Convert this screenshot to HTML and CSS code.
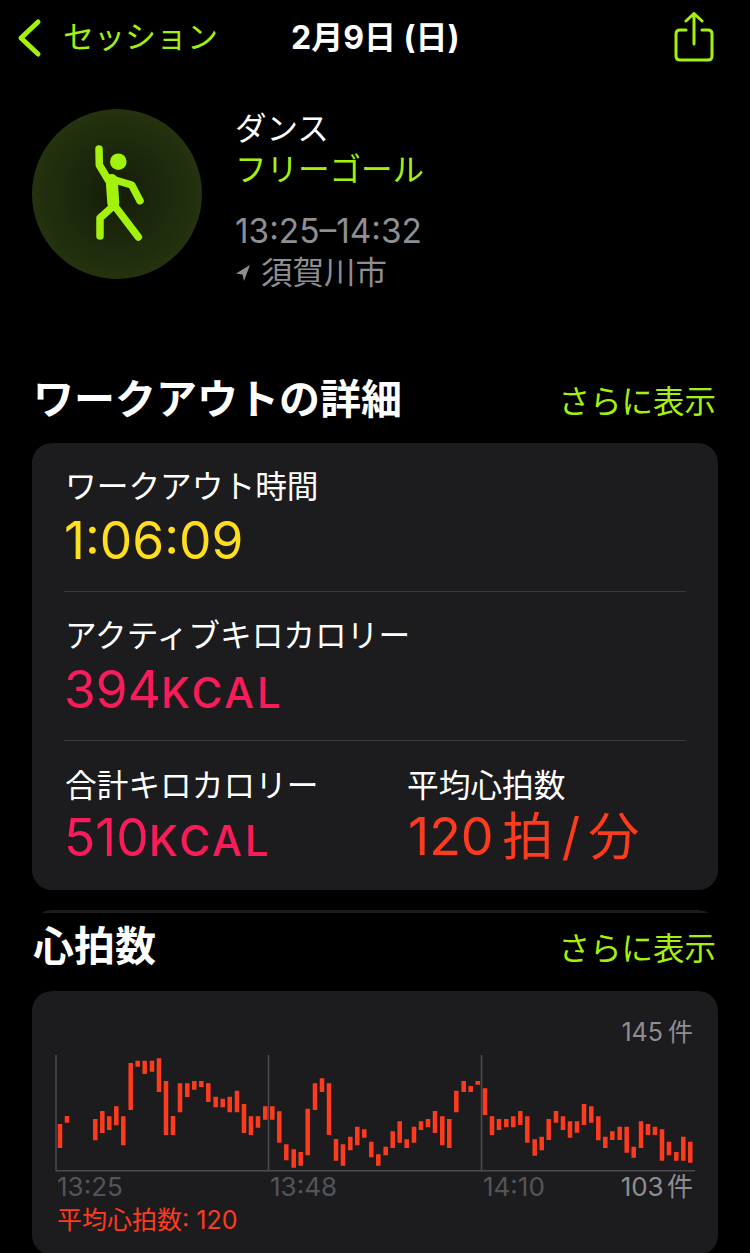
FILE: index.html
```html
<!DOCTYPE html>
<html lang="ja">
<head>
    <meta charset="UTF-8">
    <meta name="viewport" content="width=device-width, initial-scale=1.0">
    <title>ダンス</title>
    <link rel="stylesheet" href="styles.css">
</head>
<body>
    <div class="navBar">
        <div class="backBtn">
            <svg class="backIcon" width="26" height="40" viewBox="0 0 26 40"><path d="M22 4 L5 20 L22 36"/></svg>
            <span class="navText">セッション</span>
        </div>
        <div class="navTitle navText">2月9日 (日)</div>
        <svg class="shareIcon" width="40" height="52" viewBox="0 0 40 52">
            <path d="M12 18 H6 Q2 18 2 22 V44 Q2 48 6 48 H34 Q38 48 38 44 V22 Q38 18 34 18 H28"/>
            <path d="M20 32 V2 M12 9 L20 1.5 L28 9"/>
        </svg>
    </div>

    <div class="summary">
        <div class="activityCircle">
            <svg width="120" height="120" viewBox="57 134 120 120">
                <circle class="figHead" cx="118.3" cy="161.7" r="8.3"/>
                <path class="figLimb" d="M99 149 L99.3 165 L108.3 180 M115 180 L131.7 185 L140 200.7 M113.3 206 L100 218 V236 M114 205 L138.3 237"/>
                <path class="figBody" d="M111.7 180 L113.3 203"/>
            </svg>
        </div>
        <div class="summaryText">
            <div class="sumType">ダンス</div>
            <div class="sumGoal">フリーゴール</div>
            <div class="sumTime">13:25–14:32</div>
            <div class="sumPlace">
                <svg width="16" height="18" viewBox="0 0 16 18"><path d="M15 1 L1 9.5 L7.5 10.5 L9 17 Z"/></svg>
                <span>須賀川市</span>
            </div>
        </div>
    </div>

    <div class="sectionHead firstHead">
        <div class="sectionTitle">ワークアウトの詳細</div>
        <div class="moreLink">さらに表示</div>
    </div>

    <div class="card detailCard">
        <div class="statRow">
            <div class="stat">
                <div class="statLabel">ワークアウト時間</div>
                <div class="statValue yellow">1:06:09</div>
            </div>
        </div>
        <div class="statRow">
            <div class="stat">
                <div class="statLabel">アクティブキロカロリー</div>
                <div class="statValue pink">394<span class="unit">KCAL</span></div>
            </div>
        </div>
        <div class="statRow">
            <div class="stat totalCal">
                <div class="statLabel">合計キロカロリー</div>
                <div class="statValue pink">510<span class="unit">KCAL</span></div>
            </div>
            <div class="stat">
                <div class="statLabel">平均心拍数</div>
                <div class="statValue red">120 <span class="unitJa">拍 / 分</span></div>
            </div>
        </div>
    </div>

    <div class="cardEdge"></div>

    <div class="sectionHead">
        <div class="sectionTitle">心拍数</div>
        <div class="moreLink">さらに表示</div>
    </div>

    <div class="card heartCard">
        <div class="chartMax">145 件</div>
        <svg class="chart" width="686" height="135" viewBox="32 1050 686 135">
            <path class="axis" d="M56 1055 V1171 M268.5 1055 V1171 M481.5 1055 V1171 M56 1170.7 H695"/>
            <path class="bars" d="M60 1124V1148M67 1116V1122.7M95.3 1119V1140.3M102.3 1111V1133M109.3 1116.3V1130M116.3 1106.3V1125.3M123.3 1116.3V1145.3M130.7 1063V1110M137.7 1060.7V1066.7M144.7 1060.7V1074M152 1060.7V1071.7M159 1058.3V1092M166 1081V1135M173 1116V1135M180 1083.3V1112.3M187.3 1083.3V1097M194.3 1081V1089.7M201.3 1081V1087M208.3 1083.3V1102M215.7 1096.7V1107.3M222.7 1098.7V1107.3M229.7 1096.7V1112.3M237 1090.7V1112.3M244 1104V1133M251 1116.3V1135M258 1116.3V1127.7M265.3 1106.3V1119.7M272.3 1106.3V1119.7M279.3 1111.3V1142.7M286.3 1144.3V1160.3M293.7 1149.3V1167.7M300.7 1152V1165.7M307.7 1108.7V1155.3M315 1083.3V1110M322 1078.3V1092M329 1083.3V1135M336 1139V1160.7M343 1144.3V1165.7M350.3 1136.7V1150.3M357.3 1126.7V1145.3M364.3 1129.3V1137.7M371.3 1141.7V1157.3M378.3 1154.3V1165.7M385.7 1146.7V1155.3M392.7 1131.3V1148M399.7 1121.3V1142.7M406.7 1139.3V1148M414 1126.7V1142.7M421 1121.3V1130M428 1119V1127.3M435 1111V1133M442.3 1116.3V1145.3M449.3 1119V1148M456.3 1090.7V1112.3M463.7 1081V1092M470.7 1086V1092M477.7 1081V1084.7M485 1088.3V1115M492 1116.3V1135M499 1119V1130M506.3 1119V1127.3M513.3 1116.3V1127.3M520.3 1111V1125M527.3 1116.3V1142.7M534.7 1139.3V1155.7M541.7 1136.7V1150.3M548.7 1119V1140M556 1111V1122.7M563 1116.3V1130M570 1121.3V1137.7M577 1121.3V1132.7M584 1104V1125M591.3 1106.3V1122.7M598.3 1116.3V1140.3M605.3 1136.7V1148M612.3 1131.3V1140M619.7 1126.7V1140M626.7 1126.7V1152.7M633.7 1146.7V1157.7M641 1121.3V1148M648 1124V1135M655 1126.7V1135M662 1129.3V1160.7M669 1141.7V1155.3M676.3 1152V1160.7M683.3 1136.7V1160.7M690.3 1141.7V1162.7"/>
        </svg>
        <div class="chartLabels">
            <span class="timeLabel">13:25</span>
            <span class="timeLabel">13:48</span>
            <span class="timeLabel">14:10</span>
            <span class="chartMin">103 件</span>
        </div>
        <div class="chartAvg">平均心拍数: 120</div>
    </div>
</body>
</html>
```

FILE: styles.css
```css
html, body {
    height: 1253px;
    overflow: hidden;
}
body {
    margin: 0;
    background-color: #000;
    color: #fff;
    font-family: Inter, "Noto Sans CJK JP", sans-serif;
}

/* top bar */
.navBar {
    display: flex;
    align-items: center;
    height: 75px;
    padding: 0 36px 0 16px;
}
.backBtn {
    display: flex;
    align-items: center;
    gap: 21px;
    width: 275px;
    color: #a4f20c;
    font-size: 31px;
}
.navText {
    padding-bottom: 6px;
}
.backIcon path {
    fill: none;
    stroke: #a4f20c;
    stroke-width: 5;
    stroke-linecap: round;
    stroke-linejoin: round;
}
.navTitle {
    font-size: 32px;
    font-weight: 700;
}
.shareIcon {
    margin-left: auto;
}
.shareIcon path {
    fill: none;
    stroke: #a4f20c;
    stroke-width: 3;
    stroke-linecap: round;
    stroke-linejoin: round;
}

/* workout summary */
.summary {
    display: flex;
    gap: 33px;
    margin-top: 34px;
    padding-left: 32px;
}
.activityCircle {
    display: flex;
    align-items: center;
    justify-content: center;
    width: 170px;
    height: 170px;
    border-radius: 50%;
    background: radial-gradient(circle, #141d08 0%, #2a3b12 100%);
}
.figHead {
    fill: #a4f20c;
}
.figLimb, .figBody {
    fill: none;
    stroke: #a4f20c;
    stroke-linecap: round;
    stroke-linejoin: round;
}
.figLimb {
    stroke-width: 7.5;
}
.figBody {
    stroke-width: 12;
}
.summaryText {
    font-size: 31.5px;
    line-height: 41px;
    margin-top: -1px;
}
.sumGoal {
    color: #a4f20c;
}
.sumTime {
    margin-top: 21px;
    color: #8e8e93;
    font-size: 33.4px;
}
.sumPlace {
    display: flex;
    align-items: center;
    gap: 10px;
    color: #8e8e93;
}
.sumPlace svg {
    fill: #8e8e93;
}

/* section headings */
.sectionHead {
    display: flex;
    align-items: center;
    justify-content: space-between;
    height: 60px;
    padding: 0 34px 0 33px;
}
.firstHead {
    margin-top: 73px;
}
.sectionTitle {
    font-size: 41px;
    font-weight: 700;
}
.moreLink {
    padding-top: 6px;
    color: #a4f20c;
    font-size: 31.5px;
}

/* cards */
.card {
    margin: 0 32px;
    background-color: #1c1c1e;
    border-radius: 20px;
}
.detailCard {
    margin-top: 17px;
}
.cardEdge {
    height: 3px;
    margin: 20px 32px 0;
    overflow: hidden;
}
.cardEdge::before {
    content: '';
    display: block;
    height: 40px;
    border-radius: 20px;
    background-color: #1c1c1e;
}
.statRow {
    display: flex;
    height: 149px;
    margin: 0 32px;
    border-bottom: 1px solid #3a3a3c;
    box-sizing: border-box;
    padding-top: 22px;
}
.statRow:last-child {
    border-bottom: none;
    padding-top: 23px;
}
.statRow:last-child .statValue {
    margin-top: -2px;
}
.totalCal {
    width: 342px;
}
.statLabel {
    margin-left: 1px;
    font-size: 31.7px;
    line-height: 44px;
}
.statValue {
    font-size: 51.5px;
    line-height: 62px;
}
.unit {
    font-size: 42px;
    font-weight: 500;
    letter-spacing: 3px;
}
.unitJa {
    font-size: 51px;
}
.yellow {
    color: #ffde1f;
}
.pink {
    color: #fa1b5a;
}
.red {
    margin-left: 2px;
    color: #ff3b1e;
    font-size: 52px;
    word-spacing: -6px;
}

/* heart rate chart */
.heartCard {
    height: 264px;
    margin-top: 18px;
}
.chartMax {
    padding: 25px 25px 0 0;
    text-align: right;
    color: #8e8e93;
    font-size: 25px;
    line-height: 32px;
    word-spacing: -2px;
}
.chart {
    display: block;
    margin-top: 2px;
}
.axis {
    fill: none;
    stroke: #4c4c50;
    stroke-width: 1.5;
}
.bars {
    fill: none;
    stroke: #ff3b1e;
    stroke-width: 4.5;
}
.chartLabels {
    display: grid;
    grid-template-columns: 213px 213px 1fr auto;
    padding: 0 25px;
    margin-top: -15px;
    font-size: 26px;
    line-height: 34px;
}
.timeLabel {
    color: #545458;
}
.chartMin {
    color: #8e8e93;
    white-space: nowrap;
    word-spacing: -4px;
}
.chartAvg {
    padding-left: 25px;
    color: #ff3b1e;
    font-size: 25px;
    line-height: 32px;
}
```
